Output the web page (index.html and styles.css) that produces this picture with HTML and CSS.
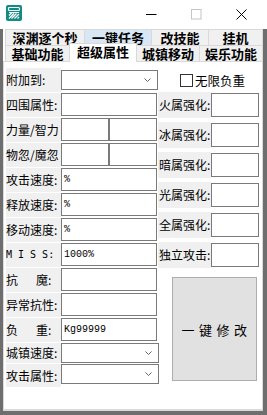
FILE: index.html
```html
<!DOCTYPE html>
<html lang="zh">
<head>
<meta charset="utf-8">
<title>超级属性</title>
<link rel="stylesheet" href="styles.css">
</head>
<body>
<div class="window">
  <div class="titlebar">
    <svg class="app-icon" width="16" height="16" viewBox="0 0 16 16">
      <rect x="0" y="0" width="16" height="16" rx="2" fill="#128a86"/>
      <rect x="2.5" y="2.5" width="11" height="3" rx="1" fill="none" stroke="#fff" stroke-width="1.2"/>
      <path d="M3 10.5 L6 7.5 M3 13.5 L8 8.5 M5.5 13.5 L10.5 8.5 M8.5 13.5 L13 9 M11.5 13.5 L13 12" stroke="#fff" stroke-width="1.3"/>
      <path d="M3 7.5 H13" stroke="#fff" stroke-width="1"/>
    </svg>
    <div class="controls">
      <span class="ctl"><svg width="11" height="11" viewBox="0 0 11 11"><path d="M0 5.5 H10.5" stroke="#000" stroke-width="1"/></svg></span>
      <span class="ctl"><svg width="11" height="11" viewBox="0 0 11 11"><rect x="0.5" y="0.5" width="9.5" height="9.5" fill="none" stroke="#c4c4c4" stroke-width="1"/></svg></span>
      <span class="ctl"><svg width="11" height="11" viewBox="0 0 11 11"><path d="M0.5 0.5 L10.5 10.5 M10.5 0.5 L0.5 10.5" stroke="#000" stroke-width="1"/></svg></span>
    </div>
  </div>
  <div class="frame">
    <div class="tabs">
      <div class="tab-row">
        <div class="tab t-a">深渊逐个秒</div>
        <div class="tab t-b hot">一键任务</div>
        <div class="tab t-c">改技能</div>
        <div class="tab t-d">挂机</div>
      </div>
      <div class="tab-row">
        <div class="tab t-e">基础功能</div>
        <div class="tab t-f selected">超级属性</div>
        <div class="tab t-g">城镇移动</div>
        <div class="tab t-h">娱乐功能</div>
      </div>
    </div>
    <div class="panel">
      <div class="left-col">
        <div class="row">
          <div class="lbl">附加到:</div>
          <div class="combo"><svg width="7" height="4" viewBox="0 0 7 4"><path d="M0.5 0.5 L3.5 3.5 L6.5 0.5" fill="none" stroke="#666" stroke-width="1"/></svg></div>
        </div>
        <div class="row">
          <div class="lbl">四围属性:</div>
          <div class="box"></div>
        </div>
        <div class="row">
          <div class="lbl">力量/智力</div>
          <div class="box half"></div>
          <div class="box half"></div>
        </div>
        <div class="row">
          <div class="lbl">物忽/魔忽</div>
          <div class="box half"></div>
          <div class="box half"></div>
        </div>
        <div class="row">
          <div class="lbl">攻击速度:</div>
          <div class="box">%</div>
        </div>
        <div class="row">
          <div class="lbl">释放速度:</div>
          <div class="box">%</div>
        </div>
        <div class="row">
          <div class="lbl">移动速度:</div>
          <div class="box">%</div>
        </div>
        <div class="row">
          <div class="lbl mono">M I S S:</div>
          <div class="box">1000%</div>
        </div>
        <div class="row">
          <div class="lbl"><span class="wide">抗</span>魔:</div>
          <div class="box"></div>
        </div>
        <div class="row">
          <div class="lbl">异常抗性:</div>
          <div class="box"></div>
        </div>
        <div class="row">
          <div class="lbl"><span class="wide">负</span>重:</div>
          <div class="box">Kg99999</div>
        </div>
        <div class="row short">
          <div class="lbl">城镇速度:</div>
          <div class="combo wide-combo"><svg width="7" height="4" viewBox="0 0 7 4"><path d="M0.5 0.5 L3.5 3.5 L6.5 0.5" fill="none" stroke="#666" stroke-width="1"/></svg></div>
        </div>
        <div class="row last">
          <div class="lbl">攻击属性:</div>
          <div class="combo wide-combo"><svg width="7" height="4" viewBox="0 0 7 4"><path d="M0.5 0.5 L3.5 3.5 L6.5 0.5" fill="none" stroke="#666" stroke-width="1"/></svg></div>
        </div>
      </div>
      <div class="right-col">
        <div class="chk-row">
          <span class="chk"></span>
          <span class="chk-text">无限负重</span>
        </div>
        <div class="rrow"><div class="rlbl">火属强化:</div><div class="rbox"></div></div>
        <div class="rrow"><div class="rlbl">冰属强化:</div><div class="rbox"></div></div>
        <div class="rrow"><div class="rlbl">暗属强化:</div><div class="rbox"></div></div>
        <div class="rrow"><div class="rlbl">光属强化:</div><div class="rbox"></div></div>
        <div class="rrow"><div class="rlbl">全属强化:</div><div class="rbox"></div></div>
        <div class="rrow"><div class="rlbl">独立攻击:</div><div class="rbox"></div></div>
        <div class="big-btn">一键修改</div>
      </div>
    </div>
  </div>
</div>
</body>
</html>
```
FILE: styles.css
```css
html, body {
  margin: 0;
  padding: 0;
  background: #ffffff;
}

.window {
  width: 267px;
  height: 415px;
  display: flex;
  flex-direction: column;
  font-family: "Noto Sans CJK SC", "Noto Sans", sans-serif;
  color: #000;
  overflow: hidden;
}

.titlebar {
  height: 29px;
  flex: 0 0 29px;
  display: flex;
  align-items: flex-start;
  background: #ffffff;
}

.app-icon {
  margin: 5px 0 0 6px;
  display: block;
}

.controls {
  margin-left: auto;
  margin-right: 3px;
  display: flex;
}

.ctl {
  width: 45px;
  height: 29px;
  display: flex;
  align-items: center;
  justify-content: center;
}

.ctl svg {
  display: block;
  margin-top: -1px;
}

.frame {
  flex: 1 1 auto;
  border-left: 3px solid #6e6e6e;
  border-right: 4px solid #6e6e6e;
  border-bottom: 4px solid #6e6e6e;
  display: flex;
  flex-direction: column;
  background: #ffffff;
}

.tabs {
  padding-left: 2px;
}

.tab-row {
  display: flex;
  height: 16px;
}

.tab {
  box-sizing: border-box;
  height: 16px;
  border: 1px solid #d9d9d9;
  border-bottom: none;
  margin-right: -1px;
  background: #f0f0f0;
  font-size: 13px;
  font-weight: bold;
  line-height: 15px;
  text-align: center;
  white-space: nowrap;
}

.tab.hot {
  background: #d8e7f5;
}

.tab.selected {
  position: relative;
  z-index: 1;
  margin-top: -2px;
  height: 19px;
  background: #ffffff;
  line-height: 16px;
}

.t-a { width: 80px; }
.t-b { width: 68px; }
.t-c { width: 58px; }
.t-d { width: 55px; }
.t-e { width: 65px; }
.t-f { width: 68px; }
.t-g { width: 64px; }
.t-h { width: 64px; }

.panel {
  box-sizing: border-box;
  height: 350px;
  border: 1px solid #d9d9d9;
  border-bottom-width: 2px;
  padding: 6px 0 0 2px;
  display: flex;
  align-items: flex-start;
}

.left-col {
  width: 152px;
  flex: 0 0 152px;
  display: flex;
  flex-direction: column;
}

.row {
  display: flex;
  height: 24px;
  margin-bottom: 1px;
  align-items: flex-start;
}

.row.short {
  height: 20px;
}

.row.last {
  height: 23px;
}

.lbl {
  width: 55px;
  flex: 0 0 55px;
  height: 100%;
  background: #f0f0f0;
  display: flex;
  align-items: center;
  font-size: 12px;
  line-height: 12px;
  white-space: pre;
}

.lbl.mono {
  font-family: "DejaVu Sans Mono", "Liberation Mono", monospace;
  font-size: 10px;
}

.wide {
  margin-right: 18px;
}

.box {
  box-sizing: border-box;
  width: 96px;
  height: 23px;
  border: 1px solid #7a7a7a;
  background: #fff;
  font-family: "Liberation Mono", "DejaVu Sans Mono", monospace;
  font-size: 10px;
  line-height: 21px;
  padding-left: 2px;
}

.box.half {
  width: 48px;
}

.combo {
  box-sizing: border-box;
  width: 97px;
  height: 20px;
  margin-top: 2px;
  border: 1px solid #7a7a7a;
  background: #fff;
  display: flex;
  align-items: center;
  justify-content: flex-end;
  padding-right: 6px;
}

.combo.wide-combo {
  width: 98px;
  margin-top: 0;
  flex: 0 0 98px;
}

.combo svg {
  display: block;
}

.right-col {
  width: 101px;
  flex: 0 0 101px;
  display: flex;
  flex-direction: column;
}

.chk-row {
  height: 24px;
  display: flex;
  align-items: center;
  padding-left: 22px;
}

.chk {
  box-sizing: border-box;
  width: 13px;
  height: 13px;
  border: 1px solid #333333;
  background: #fff;
  margin-top: 1px;
}

.chk-text {
  margin-left: 2px;
  font-size: 12.5px;
  line-height: 13px;
}

.rrow {
  display: flex;
  height: 26px;
  margin-bottom: 4px;
  align-items: flex-start;
}

.rlbl {
  width: 53px;
  flex: 0 0 53px;
  height: 100%;
  background: #f0f0f0;
  display: flex;
  align-items: center;
  padding-left: 1px;
  box-sizing: border-box;
  font-size: 12px;
  line-height: 12px;
  white-space: nowrap;
}

.rbox {
  box-sizing: border-box;
  width: 48px;
  height: 24px;
  margin-top: 1px;
  border: 1px solid #7a7a7a;
  background: #fff;
}

.big-btn {
  box-sizing: border-box;
  width: 85px;
  height: 104px;
  margin: 5px 0 0 14px;
  border: 1px solid #adadad;
  background: #e1e1e1;
  display: flex;
  align-items: center;
  justify-content: center;
  font-size: 13px;
  letter-spacing: 4.5px;
  padding-left: 4px;
}
```
